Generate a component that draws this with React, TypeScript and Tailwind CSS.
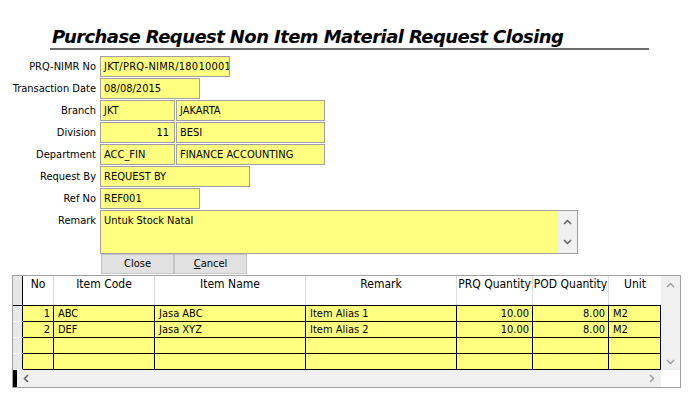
const FONT = "font-['DejaVu_Sans_Condensed','Liberation_Sans',sans-serif]";

function Box({ w, children, right }: { w: string; children?: React.ReactNode; right?: boolean }) {
  return (
    <div
      className={`${w} h-[21px] border border-[#a0a0a0] bg-[#ffff80] text-[11px] leading-[19px] text-black whitespace-nowrap overflow-hidden ${
        right ? "text-right pr-[5px]" : "pl-[3px]"
      }`}
    >
      {children}
    </div>
  );
}

function Row({ label, children }: { label: string; children: React.ReactNode }) {
  return (
    <div className="flex h-[22px]">
      <div className="w-[100px] pr-[4px] text-right text-[11px] leading-[21px] text-black">{label}</div>
      <div className="flex gap-[1px]">{children}</div>
    </div>
  );
}

function Up({ color = "#606060" }: { color?: string }) {
  return (
    <svg width="9" height="6" viewBox="0 0 9 6">
      <polyline points="1,5 4.5,1.5 8,5" fill="none" stroke={color} strokeWidth="1.5" />
    </svg>
  );
}

function Down({ color = "#606060" }: { color?: string }) {
  return (
    <svg width="9" height="6" viewBox="0 0 9 6">
      <polyline points="1,1 4.5,4.5 8,1" fill="none" stroke={color} strokeWidth="1.5" />
    </svg>
  );
}

function Left({ color = "#606060" }: { color?: string }) {
  return (
    <svg width="6" height="9" viewBox="0 0 6 9">
      <polyline points="5,1 1.5,4.5 5,8" fill="none" stroke={color} strokeWidth="1.5" />
    </svg>
  );
}

function Right({ color = "#606060" }: { color?: string }) {
  return (
    <svg width="6" height="9" viewBox="0 0 6 9">
      <polyline points="1,1 4.5,4.5 1,8" fill="none" stroke={color} strokeWidth="1.5" />
    </svg>
  );
}

const cols = [
  { title: "No", w: "w-[31px]", align: "text-right pr-[3px]" },
  { title: "Item Code", w: "w-[101px]", align: "pl-[4px]" },
  { title: "Item Name", w: "w-[151px]", align: "pl-[4px]" },
  { title: "Remark", w: "w-[151px]", align: "pl-[4px]" },
  { title: "PRQ Quantity", w: "w-[76px]", align: "text-right pr-[3px]" },
  { title: "POD Quantity", w: "w-[76px]", align: "text-right pr-[3px]" },
  { title: "Unit", w: "w-[52px]", align: "pl-[4px]" },
];

const rows = [
  ["1", "ABC", "Jasa ABC", "Item Alias 1", "10.00", "8.00", "M2"],
  ["2", "DEF", "Jasa XYZ", "Item Alias 2", "10.00", "8.00", "M2"],
  ["", "", "", "", "", "", ""],
  ["", "", "", "", "", "", ""],
];

export default function App() {
  return (
    <div className={`w-[700px] h-[400px] bg-white overflow-hidden ${FONT}`}>
      {/* Title */}
      <div className="pt-[26px] ml-[50px] w-[599px] border-b-2 border-[#6b6b6b] pl-[2px]">
        <div className="font-['DejaVu_Sans',sans-serif] font-bold italic text-[18px] tracking-[-0.58px] leading-[22px] text-black whitespace-nowrap">
          Purchase Request Non Item Material Request Closing
        </div>
      </div>

      {/* Form */}
      <div className="mt-[6px]">
        <Row label="PRQ-NIMR No">
          <Box w="w-[130px]">
            <span className="tracking-[0.25px]">JKT/PRQ-NIMR/18010001</span>
          </Box>
        </Row>
        <Row label="Transaction Date">
          <Box w="w-[100px]">08/08/2015</Box>
        </Row>
        <Row label="Branch">
          <Box w="w-[75px]">JKT</Box>
          <Box w="w-[149px]">JAKARTA</Box>
        </Row>
        <Row label="Division">
          <Box w="w-[75px]" right>
            11
          </Box>
          <Box w="w-[149px]">BESI</Box>
        </Row>
        <Row label="Department">
          <Box w="w-[75px]">ACC_FIN</Box>
          <Box w="w-[149px]">FINANCE ACCOUNTING</Box>
        </Row>
        <Row label="Request By">
          <Box w="w-[150px]">REQUEST BY</Box>
        </Row>
        <Row label="Ref No">
          <Box w="w-[100px]">REF001</Box>
        </Row>
        <div className="flex h-[44px]">
          <div className="w-[100px] pr-[4px] text-right text-[11px] leading-[21px] text-black">Remark</div>
          <div className="w-[478px] h-[44px] border border-[#a0a0a0] bg-[#ffff80] flex">
            <div className="flex-1 pl-[3px] text-[11px] leading-[19px] text-black">Untuk Stock Natal</div>
            <div className="w-[20px] bg-[#f0f0f0] flex flex-col items-center justify-between py-[8px]">
              <Up />
              <Down />
            </div>
          </div>
        </div>
        <div className="flex ml-[101px] h-[20px]">
          <div className="w-[73px] h-[20px] bg-[#e1e1e1] border border-[#c4c4c4] text-center text-[11px] leading-[18px] text-black">
            Close
          </div>
          <div className="w-[73px] h-[20px] bg-[#e1e1e1] border border-[#c4c4c4] text-center text-[11px] leading-[18px] text-black">
            <span className="underline">C</span>ancel
          </div>
        </div>
      </div>

      {/* Grid */}
      <div className="ml-[12px] mt-[1px] w-[669px] h-[113px] border border-[#a0a0a0] flex flex-col text-[11px] text-black">
        <div className="flex h-[94px]">
          <div className="w-[648px] flex flex-col">
            {/* header */}
            <div className="flex h-[30px] border-b border-black">
              <div className="w-[10px] bg-[#e6e6e6] border-r border-black" />
              {cols.map((c, i) => (
                <div
                  key={c.title}
                  className={`${c.w} text-center text-[12px] pt-[1px] leading-[15px] whitespace-nowrap ${
                    i < cols.length - 1 ? "border-r border-[#dcdcdc]" : ""
                  }`}
                >
                  {c.title}
                </div>
              ))}
            </div>
            {rows.map((r, ri) => (
              <div key={ri} className="flex h-[16px]">
                <div className="w-[10px] bg-[#e8e8e8] border-b border-[#f7f7f7] border-r border-r-black" />
                {cols.map((c, ci) => (
                  <div
                    key={ci}
                    className={`${c.w} bg-[#ffff80] border-b border-r border-black leading-[15px] whitespace-nowrap ${c.align}`}
                  >
                    {r[ci]}
                  </div>
                ))}
              </div>
            ))}
          </div>
          <div className="w-[19px] bg-[#f0f0f0] flex flex-col items-center justify-between pt-[6px] pb-[5px]">
            <Up color="#a0a0a0" />
            <Down color="#a0a0a0" />
          </div>
        </div>
        <div className="flex h-[17px]">
          <div className="w-[648px] bg-[#f0f0f0] flex items-center">
            <div className="w-[4px] h-[17px] bg-black" />
            <div className="ml-[6px]">
              <Left />
            </div>
            <div className="flex-1" />
            <div className="mr-[6px]">
              <Right color="#a0a0a0" />
            </div>
          </div>
          <div className="w-[19px] bg-white" />
        </div>
      </div>
    </div>
  );
}
